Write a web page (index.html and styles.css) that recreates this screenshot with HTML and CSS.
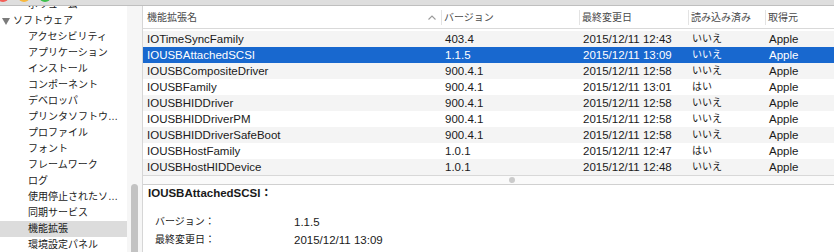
FILE: index.html
```html
<!DOCTYPE html>
<html>
<head>
  <meta charset="utf-8">
  <title>システム情報</title>
  <link rel="stylesheet" href="styles.css">
</head>

<body>

<div class='titlebar'>
  <span class='light red'></span>
  <span class='light yellow'></span>
  <span class='light green'></span>
</div>

<div class='main'>
  <div class='sidebar'>
    <ul class='tree'>
      <li>ボリューム</li>
      <li class='group'><span class='disclosure'></span>ソフトウェア</li>
      <li>アクセシビリティ</li>
      <li>アプリケーション</li>
      <li>インストール</li>
      <li>コンポーネント</li>
      <li>デベロッパ</li>
      <li>プリンタソフトウ…</li>
      <li>プロファイル</li>
      <li>フォント</li>
      <li>フレームワーク</li>
      <li>ログ</li>
      <li>使用停止されたソ…</li>
      <li>同期サービス</li>
      <li class='selected'>機能拡張</li>
      <li>環境設定パネル</li>
    </ul>
  </div>
  <div class='scroller'><div class='thumb'></div></div>

  <div class='content'>
    <div class='table'>
      <div class='head'>
        <div class='hcell first'>機能拡張名
          <svg class='sort' width='8' height='5' viewBox='0 0 8 5'><path d='M0.5 4.5 L4 1 L7.5 4.5' fill='none' stroke='#9a9a9a' stroke-width='1.1'/></svg>
        </div>
        <div class='hcell'>バージョン</div>
        <div class='hcell'>最終変更日</div>
        <div class='hcell'>読み込み済み</div>
        <div class='hcell'>取得元</div>
      </div>
      <div class='rows'>
        <div class='row'><span>IOTimeSyncFamily</span><span>403.4</span><span>2015/12/11 12:43</span><span class='ja'>いいえ</span><span>Apple</span></div>
        <div class='row selected'><span>IOUSBAttachedSCSI</span><span>1.1.5</span><span>2015/12/11 13:09</span><span class='ja'>いいえ</span><span>Apple</span></div>
        <div class='row'><span>IOUSBCompositeDriver</span><span>900.4.1</span><span>2015/12/11 12:58</span><span class='ja'>いいえ</span><span>Apple</span></div>
        <div class='row'><span>IOUSBFamily</span><span>900.4.1</span><span>2015/12/11 13:01</span><span class='ja'>はい</span><span>Apple</span></div>
        <div class='row'><span>IOUSBHIDDriver</span><span>900.4.1</span><span>2015/12/11 12:58</span><span class='ja'>いいえ</span><span>Apple</span></div>
        <div class='row'><span>IOUSBHIDDriverPM</span><span>900.4.1</span><span>2015/12/11 12:58</span><span class='ja'>いいえ</span><span>Apple</span></div>
        <div class='row'><span>IOUSBHIDDriverSafeBoot</span><span>900.4.1</span><span>2015/12/11 12:58</span><span class='ja'>いいえ</span><span>Apple</span></div>
        <div class='row'><span>IOUSBHostFamily</span><span>1.0.1</span><span>2015/12/11 12:47</span><span class='ja'>はい</span><span>Apple</span></div>
        <div class='row'><span>IOUSBHostHIDDevice</span><span>1.0.1</span><span>2015/12/11 12:48</span><span class='ja'>いいえ</span><span>Apple</span></div>
      </div>
    </div>

    <div class='splitter'><span class='grip'></span></div>

    <div class='detail'>
      <h4>IOUSBAttachedSCSI：</h4>
      <div class='props'>
        <span class='ja'>バージョン：</span><span>1.1.5</span>
        <span class='ja'>最終変更日：</span><span>2015/12/11 13:09</span>
      </div>
    </div>
  </div>
</div>

</body>
</html>
```

FILE: styles.css
```css
html, body {
  margin: 0;
  background: #fff;
}
body {
  font-family: "Liberation Sans", "Noto Sans CJK JP", sans-serif;
  font-size: 11.5px;
  color: #1a1a1a;
  width: 834px;
  height: 252px;
  overflow: hidden;
}
.ja {
  font-size: 10px;
}

/* window chrome */
.titlebar {
  height: 5px;
  background: #dedede;
  border-bottom: 1px solid #bfbfbf;
  display: flex;
  gap: 9px;
  overflow: hidden;
}
.light {
  width: 12px;
  height: 12px;
  border-radius: 50%;
  margin-top: -10px;
}
.red { background: #f25f58; margin-left: -3px; }
.yellow { background: #f7b73c; }
.green { background: #3ebf4b; }

.main {
  display: flex;
  height: 246px;
}

/* source list */
.sidebar {
  width: 127px;
  overflow: hidden;
}
.tree {
  list-style: none;
  margin: -9px 0 0;
  padding: 0;
}
.tree li {
  height: 16px;
  line-height: 16px;
  font-size: 10px;
  padding-left: 28px;
  white-space: nowrap;
}
.tree .group {
  padding-left: 2px;
  display: flex;
  align-items: center;
}
.disclosure {
  width: 0;
  height: 0;
  border-left: 4px solid transparent;
  border-right: 4px solid transparent;
  border-top: 7px solid #7b7b7b;
  margin-right: 3px;
}
.tree .selected {
  background: #dcdcdc;
}

.scroller {
  width: 15px;
  background: #f6f6f6;
  border-right: 1px solid #d6d6d6;
  overflow: hidden;
}
.thumb {
  margin: 178px 0 0 4px;
  width: 7px;
  height: 100px;
  border-radius: 4px;
  background: #c3c3c3;
}

/* extensions table */
.content {
  flex: 1;
  display: flex;
  flex-direction: column;
}
.head, .row {
  display: grid;
  grid-template-columns: 298px 138px 109px 77px 1fr;
}
.head {
  height: 22px;
  border-bottom: 1px solid #d9d9d9;
  margin-bottom: 2px;
  align-items: center;
}
.hcell {
  height: 15px;
  line-height: 15px;
  font-size: 10px;
  color: #4a4a4a;
  border-left: 1px solid #e3e3e3;
  padding-left: 2px;
  white-space: nowrap;
}
.hcell.first {
  border-left: none;
  padding-left: 4px;
  padding-right: 5px;
  display: flex;
  justify-content: space-between;
  align-items: center;
}
.row {
  height: 16px;
  line-height: 16px;
  white-space: nowrap;
}
.row span {
  padding-left: 4px;
}
.rows .row:nth-child(odd) {
  background: #f4f4f4;
}
.rows .row.selected {
  background: #1868cf;
  color: #fff;
}

.splitter {
  height: 8px;
  border-top: 1px solid #d8d8d8;
  border-bottom: 1px solid #d0d0d0;
  background: #fafafa;
  display: flex;
  align-items: center;
}
.grip {
  width: 6px;
  height: 6px;
  border-radius: 50%;
  background: #cbcbcb;
  margin-left: 366px;
}

/* detail pane */
.detail {
  padding-left: 5px;
}
.detail h4 {
  margin: 0;
  font-size: 11.5px;
  line-height: 16px;
}
.props {
  display: grid;
  grid-template-columns: 139px 1fr;
  line-height: 18px;
  margin-top: 12px;
  padding-left: 7px;
}
```
